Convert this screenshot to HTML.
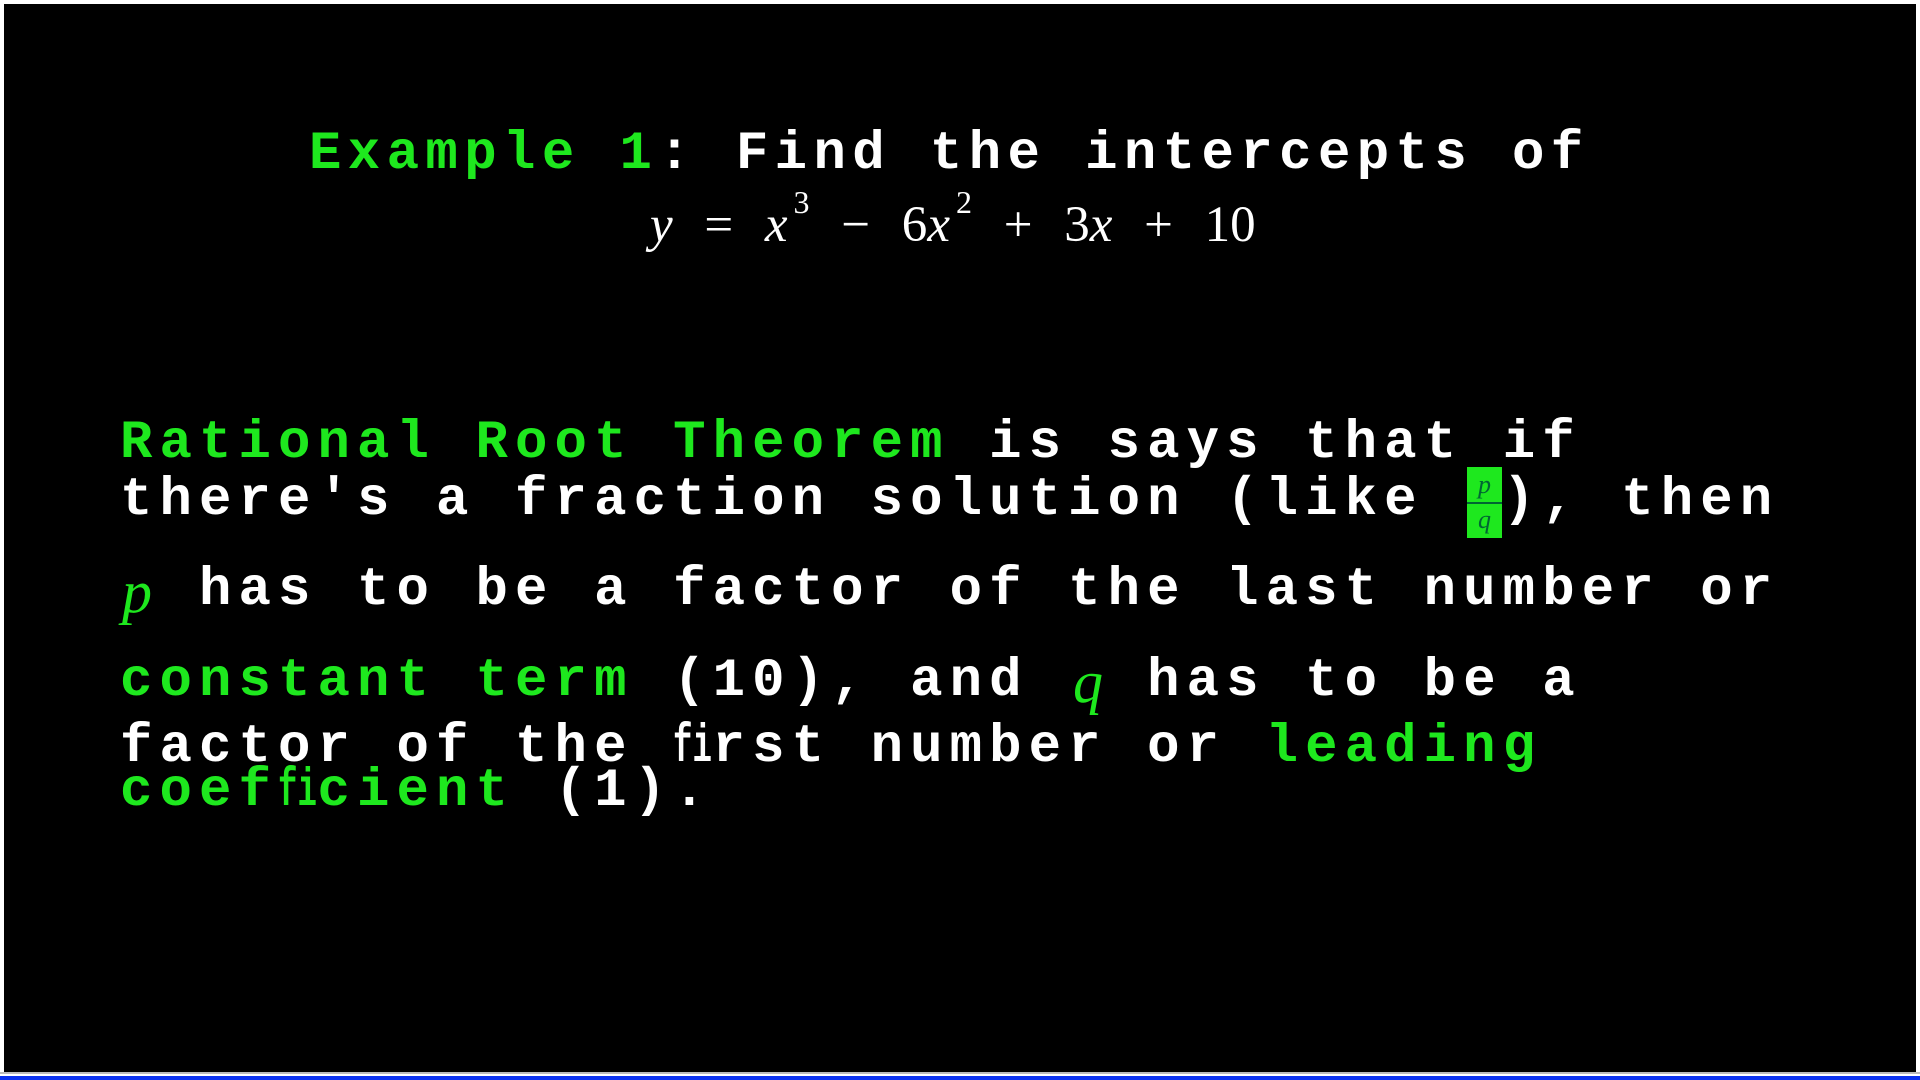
<!DOCTYPE html>
<html><head><meta charset="utf-8"><style>
html,body{margin:0;padding:0;width:1920px;height:1080px;background:#fff;overflow:hidden;position:relative}
#bg{position:absolute;left:4px;top:4px;width:1912px;height:1068px;background:#000}
#line{position:absolute;left:0;top:1072px;width:1920px;height:2px;background:#bbb}
#blue{position:absolute;left:0;top:1076px;width:1920px;height:4px;background:#0a32f0}
.t{position:absolute;white-space:pre;font-family:"Liberation Mono",monospace;font-weight:bold;font-size:54px;letter-spacing:7.1px;color:#fff;line-height:1}
.g{color:#1ee81e}
.fi{display:inline-block;width:39.5px;letter-spacing:0;transform:scaleX(0.6);transform-origin:left center}
.m{position:absolute;font-family:"Liberation Serif",serif;font-style:italic;color:#1ee81e;font-size:60px;line-height:1}
#eq{position:absolute;left:650px;top:200px;font-family:"Liberation Serif",serif;font-size:51px;color:#fff;white-space:pre;line-height:1;word-spacing:19px}
#eq i{font-style:italic}
#eq sup{font-size:32px;position:relative;top:-14px;vertical-align:top;margin-left:6px}
#frac{position:absolute;left:1467px;top:467px;width:35px;height:71px;background:#1ee81e}
#frac div{position:absolute;left:0;width:35px;text-align:center;font-family:"Liberation Serif",serif;font-style:italic;font-size:26px;color:#063;line-height:1}
</style></head><body>
<div id="bg"></div><div id="line"></div><div id="blue"></div>
<div class="t" style="left:309px;top:128px;letter-spacing:6.4px"><span class="g">Example 1</span>: Find the intercepts of</div>
<div id="eq"><i>y</i> = <i>x</i><sup>3</sup> − 6<i>x</i><sup>2</sup> + 3<i>x</i> + 10</div>
<div class="t" style="left:120px;top:417px"><span class="g">Rational Root Theorem</span> is says that if</div>
<div class="t" style="left:120px;top:474px">there's a fraction solution (like  ), then</div>
<div id="frac"><div style="top:5px">p</div><div style="top:35px;height:2px;background:#063"></div><div style="top:40px">q</div></div>
<div class="t" style="left:120px;top:564px">  has to be a factor of the last number or</div>
<div class="m" style="left:122px;top:562px">p</div>
<div class="t" style="left:120px;top:655px"><span class="g">constant term</span> (10), and   has to be a</div>
<div class="m" style="left:1073px;top:652px">q</div>
<div class="t" style="left:120px;top:721px">factor of the <span class="fi">fi</span>rst number or <span class="g">leading</span></div>
<div class="t" style="left:120px;top:765px"><span class="g">coef<span class="fi">fi</span>cient</span> (1).</div>
</body></html>
